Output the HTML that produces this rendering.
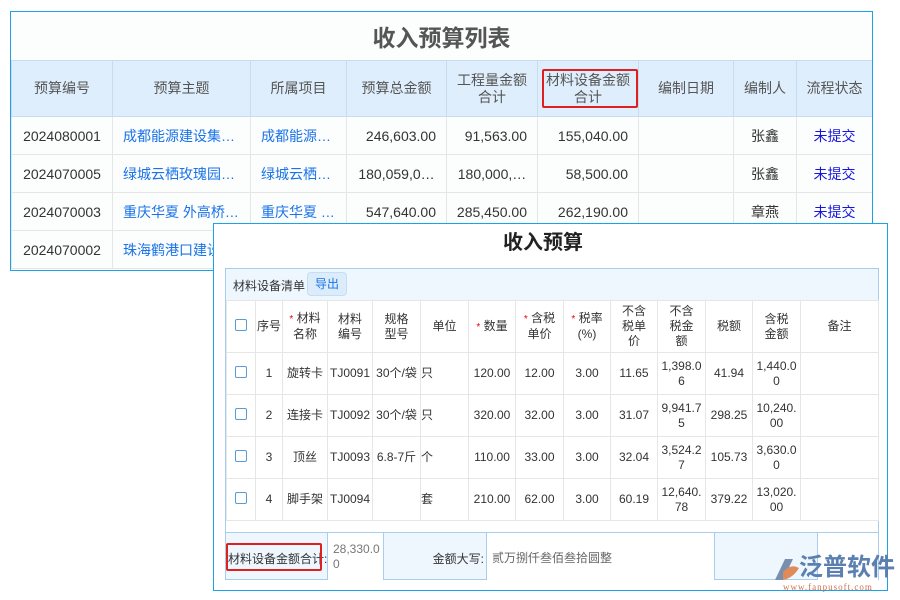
<!DOCTYPE html><html><head><meta charset="utf-8"><style>
*{box-sizing:border-box;margin:0;padding:0}
body{width:900px;height:600px;background:#fff;position:relative;overflow:hidden;font-family:"Liberation Sans","Noto Sans CJK SC",sans-serif;font-size:13px;color:#333}
.abs{position:absolute}
table{border-collapse:collapse;table-layout:fixed;position:absolute}
td{border:1px solid #e6e6e6;text-align:center;overflow:hidden;white-space:nowrap}
.t1 th{background:#dfeefc;border:1px solid #c6dcf0;font-weight:normal;color:#555;font-size:14px;line-height:17px}
.t1 td{font-size:14px;height:38px;padding:0}
.t1 tr.d{height:38px}
.lk{color:#1a73e8;text-align:left;padding-left:10px!important}
.r{text-align:right;padding-right:10px!important}
.blue{color:#1515dd}
.t2 th{background:#fff;border:1px solid #e6e6e6;font-weight:normal;font-size:12px;line-height:15px;color:#333}
.t2 td{font-size:12px;height:42px;line-height:15px;white-space:normal}
.s{color:#e00;font-size:10px}
.cb{display:inline-block;width:12px;height:12px;border:1px solid #5b9bd5;border-radius:2px;background:#fff}
</style></head><body>
<div class="abs" style="left:10px;top:11px;width:863px;height:260px;border:1px solid #1aa3e8;background:#fcfdfd;overflow:hidden">
<div style="position:absolute;left:0;top:7px;width:861px;text-align:center;font-size:23px;font-weight:bold;color:#555">收入预算列表</div>
<table class="t1" style="left:0;top:48px;width:861px">
<colgroup><col width="101"><col width="138"><col width="96"><col width="100"><col width="91"><col width="101"><col width="95"><col width="63"><col width="76"></colgroup>
<tr style="height:56px"><th>预算编号</th><th>预算主题</th><th>所属项目</th><th>预算总金额</th><th>工程量金额<br>合计</th><th>材料设备金额<br>合计</th><th>编制日期</th><th>编制人</th><th>流程状态</th></tr>
<tr class="d"><td>2024080001</td><td class="lk">成都能源建设集…</td><td class="lk">成都能源…</td><td class="r">246,603.00</td><td class="r">91,563.00</td><td class="r">155,040.00</td><td></td><td>张鑫</td><td class="blue">未提交</td></tr>
<tr class="d"><td>2024070005</td><td class="lk">绿城云栖玫瑰园…</td><td class="lk">绿城云栖…</td><td>180,059,0…</td><td>180,000,…</td><td class="r">58,500.00</td><td></td><td>张鑫</td><td class="blue">未提交</td></tr>
<tr class="d"><td>2024070003</td><td class="lk">重庆华夏 外高桥…</td><td class="lk">重庆华夏 …</td><td class="r">547,640.00</td><td class="r">285,450.00</td><td class="r">262,190.00</td><td></td><td>章燕</td><td class="blue">未提交</td></tr>
<tr class="d"><td>2024070002</td><td class="lk">珠海鹤港口建设</td><td></td><td></td><td></td><td></td><td></td><td></td><td></td></tr>
</table>
</div>
<div class="abs" style="left:542px;top:69px;width:96px;height:39px;border:2px solid #e02020;border-radius:2px"></div>

<div class="abs" style="left:213px;top:223px;width:675px;height:368px;border:1px solid #1aa3e8;background:#fff"></div>
<div class="abs" style="left:213px;top:226px;width:660px;text-align:center;font-size:20px;font-weight:bold;color:#222">收入预算</div>
<div class="abs" style="left:225px;top:268px;width:654px;height:312px;border:1px solid #a9cdef;background:#eef6fe"></div>
<div class="abs" style="left:233px;top:277px;font-size:12px">材料设备清单</div>
<div class="abs" style="left:307px;top:272px;width:40px;height:24px;background:#dcecfb;border:1px solid #c4def5;border-radius:4px;color:#1a73e8;font-size:12px;text-align:center;line-height:22px">导出</div>
<div class="abs" style="left:226px;top:300px;width:652px;height:232px;background:#fff"></div>
<table class="t2" style="left:226px;top:300px;width:652px">
<colgroup><col width="29"><col width="27"><col width="45"><col width="45"><col width="48"><col width="48"><col width="47"><col width="48"><col width="47"><col width="47"><col width="48"><col width="47"><col width="48"><col width="78"></colgroup>
<tr style="height:52px"><th><span class="cb"></span></th><th>序号</th><th><span class="s">*</span> 材料<br>名称</th><th>材料<br>编号</th><th>规格<br>型号</th><th>单位</th><th><span class="s">*</span> 数量</th><th><span class="s">*</span> 含税<br>单价</th><th><span class="s">*</span> 税率<br>(%)</th><th>不含<br>税单<br>价</th><th>不含<br>税金<br>额</th><th>税额</th><th>含税<br>金额</th><th>备注</th></tr>
<tr><td><span class="cb"></span></td><td>1</td><td>旋转卡</td><td>TJ0091</td><td>30个/袋</td><td style="text-align:left">只</td><td>120.00</td><td>12.00</td><td>3.00</td><td>11.65</td><td>1,398.0<br>6</td><td>41.94</td><td>1,440.0<br>0</td><td></td></tr>
<tr><td><span class="cb"></span></td><td>2</td><td>连接卡</td><td>TJ0092</td><td>30个/袋</td><td style="text-align:left">只</td><td>320.00</td><td>32.00</td><td>3.00</td><td>31.07</td><td>9,941.7<br>5</td><td>298.25</td><td>10,240.<br>00</td><td></td></tr>
<tr><td><span class="cb"></span></td><td>3</td><td>顶丝</td><td>TJ0093</td><td>6.8-7斤</td><td style="text-align:left">个</td><td>110.00</td><td>33.00</td><td>3.00</td><td>32.04</td><td>3,524.2<br>7</td><td>105.73</td><td>3,630.0<br>0</td><td></td></tr>
<tr><td><span class="cb"></span></td><td>4</td><td>脚手架</td><td>TJ0094</td><td></td><td style="text-align:left">套</td><td>210.00</td><td>62.00</td><td>3.00</td><td>60.19</td><td>12,640.<br>78</td><td>379.22</td><td>13,020.<br>00</td><td></td></tr>
</table>
<div class="abs" style="left:226px;top:532px;width:652px;height:1px;background:#a9cdef"></div>
<div class="abs" style="left:327px;top:533px;width:57px;height:47px;background:#fff;border-left:1px solid #a9cdef;border-right:1px solid #a9cdef;font-size:12px;color:#777;padding:9px 0 0 5px;line-height:15px">28,330.0<br>0</div>
<div class="abs" style="left:384px;top:550px;width:100px;text-align:right;font-size:12px">金额大写:</div>
<div class="abs" style="left:486px;top:533px;width:229px;height:47px;background:#fff;border-left:1px solid #a9cdef;border-right:1px solid #a9cdef;font-size:12px;color:#666;padding:16px 0 0 5px">贰万捌仟叁佰叁拾圆整</div>
<div class="abs" style="left:817px;top:533px;width:61px;height:47px;background:#fff;border-left:1px solid #a9cdef"></div>
<div class="abs" style="left:228px;top:550px;font-size:12px;white-space:nowrap">材料设备金额合计:</div>
<div class="abs" style="left:226px;top:543px;width:96px;height:28px;border:2px solid #e02020;border-radius:2px"></div>
<svg class="abs" style="left:772px;top:555px" width="28" height="30" viewBox="0 0 28 30"><path d="M3 25 L13 4 L21 4 L11 25Z" fill="#7a8fb0"/><path d="M11 17 Q19 8 27 13 Q21 23 11 25Z" fill="#e08a5a"/></svg>
<div class="abs" style="left:799px;top:554px;font-size:24px;line-height:28px;color:#5a7fb0;font-weight:bold;white-space:nowrap">泛普软件</div>
<div class="abs" style="left:783px;top:582px;font-size:9px;color:#d07050;font-family:'Liberation Serif',serif;letter-spacing:1px;white-space:nowrap">www.fanpusoft.com</div>
</body></html>
